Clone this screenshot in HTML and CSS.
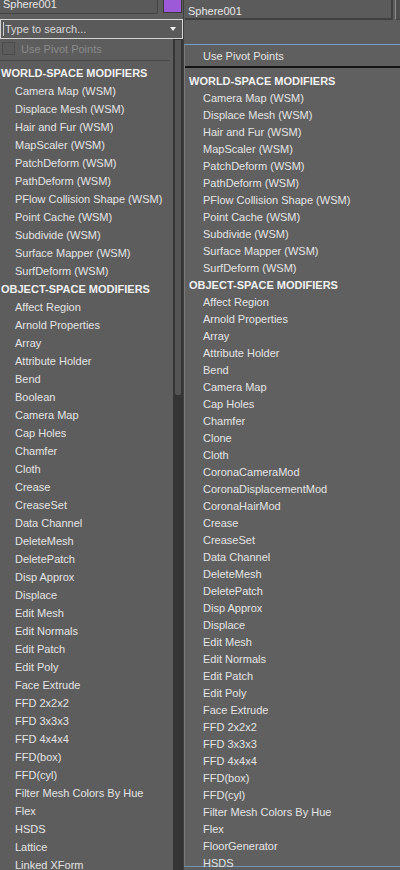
FILE: index.html
```html
<!DOCTYPE html>
<html>
<head>
<meta charset="utf-8">
<link rel="stylesheet" href="styles.css">
</head>
<body>
<div class="app">
  <div class="left">
    <div class="left-top">
      <div class="name-field">Sphere001</div>
      <div class="swatch"></div>
    </div>
    <div class="search">
      <span class="caret"></span><span class="search-text">Type to search...</span>
      <span class="arrow"></span>
    </div>
    <div class="left-body">
      <div class="left-list">
        <div class="pivot"><span class="check"></span><span>Use Pivot Points</span></div>
        <div class="sep"></div>
        <div class="hdr">WORLD-SPACE MODIFIERS</div>
        <div class="it">Camera Map (WSM)</div>
        <div class="it">Displace Mesh (WSM)</div>
        <div class="it">Hair and Fur (WSM)</div>
        <div class="it">MapScaler (WSM)</div>
        <div class="it">PatchDeform (WSM)</div>
        <div class="it">PathDeform (WSM)</div>
        <div class="it">PFlow Collision Shape (WSM)</div>
        <div class="it">Point Cache (WSM)</div>
        <div class="it">Subdivide (WSM)</div>
        <div class="it">Surface Mapper (WSM)</div>
        <div class="it">SurfDeform (WSM)</div>
        <div class="hdr">OBJECT-SPACE MODIFIERS</div>
        <div class="it">Affect Region</div>
        <div class="it">Arnold Properties</div>
        <div class="it">Array</div>
        <div class="it">Attribute Holder</div>
        <div class="it">Bend</div>
        <div class="it">Boolean</div>
        <div class="it">Camera Map</div>
        <div class="it">Cap Holes</div>
        <div class="it">Chamfer</div>
        <div class="it">Cloth</div>
        <div class="it">Crease</div>
        <div class="it">CreaseSet</div>
        <div class="it">Data Channel</div>
        <div class="it">DeleteMesh</div>
        <div class="it">DeletePatch</div>
        <div class="it">Disp Approx</div>
        <div class="it">Displace</div>
        <div class="it">Edit Mesh</div>
        <div class="it">Edit Normals</div>
        <div class="it">Edit Patch</div>
        <div class="it">Edit Poly</div>
        <div class="it">Face Extrude</div>
        <div class="it">FFD 2x2x2</div>
        <div class="it">FFD 3x3x3</div>
        <div class="it">FFD 4x4x4</div>
        <div class="it">FFD(box)</div>
        <div class="it">FFD(cyl)</div>
        <div class="it">Filter Mesh Colors By Hue</div>
        <div class="it">Flex</div>
        <div class="it">HSDS</div>
        <div class="it">Lattice</div>
        <div class="it">Linked XForm</div>
      </div>
      <div class="scroll"><div class="thumb"></div></div>
    </div>
  </div>
  <div class="right">
    <div class="right-top">
      <div class="name-field2">Sphere001</div>
      <div class="edge"></div>
    </div>
    <div class="popup">
      <div class="pivot2">Use Pivot Points</div>
      <div class="black"></div>
      <div class="list2">
        <div class="hdr2">WORLD-SPACE MODIFIERS</div>
        <div class="it2">Camera Map (WSM)</div>
        <div class="it2">Displace Mesh (WSM)</div>
        <div class="it2">Hair and Fur (WSM)</div>
        <div class="it2">MapScaler (WSM)</div>
        <div class="it2">PatchDeform (WSM)</div>
        <div class="it2">PathDeform (WSM)</div>
        <div class="it2">PFlow Collision Shape (WSM)</div>
        <div class="it2">Point Cache (WSM)</div>
        <div class="it2">Subdivide (WSM)</div>
        <div class="it2">Surface Mapper (WSM)</div>
        <div class="it2">SurfDeform (WSM)</div>
        <div class="hdr2">OBJECT-SPACE MODIFIERS</div>
        <div class="it2">Affect Region</div>
        <div class="it2">Arnold Properties</div>
        <div class="it2">Array</div>
        <div class="it2">Attribute Holder</div>
        <div class="it2">Bend</div>
        <div class="it2">Camera Map</div>
        <div class="it2">Cap Holes</div>
        <div class="it2">Chamfer</div>
        <div class="it2">Clone</div>
        <div class="it2">Cloth</div>
        <div class="it2">CoronaCameraMod</div>
        <div class="it2">CoronaDisplacementMod</div>
        <div class="it2">CoronaHairMod</div>
        <div class="it2">Crease</div>
        <div class="it2">CreaseSet</div>
        <div class="it2">Data Channel</div>
        <div class="it2">DeleteMesh</div>
        <div class="it2">DeletePatch</div>
        <div class="it2">Disp Approx</div>
        <div class="it2">Displace</div>
        <div class="it2">Edit Mesh</div>
        <div class="it2">Edit Normals</div>
        <div class="it2">Edit Patch</div>
        <div class="it2">Edit Poly</div>
        <div class="it2">Face Extrude</div>
        <div class="it2">FFD 2x2x2</div>
        <div class="it2">FFD 3x3x3</div>
        <div class="it2">FFD 4x4x4</div>
        <div class="it2">FFD(box)</div>
        <div class="it2">FFD(cyl)</div>
        <div class="it2">Filter Mesh Colors By Hue</div>
        <div class="it2">Flex</div>
        <div class="it2">FloorGenerator</div>
        <div class="it2">HSDS</div>
      </div>
    </div>
  </div>
</div>
</body>
</html>
```

FILE: styles.css
```css
html, body {
  margin: 0;
  padding: 0;
  background: #5d5d5d;
}
body {
  width: 400px;
  height: 870px;
  overflow: hidden;
  font-family: "Liberation Sans", Arial, sans-serif;
  font-size: 11px;
  color: #e4e4e4;
}
.app {
  display: flex;
  height: 870px;
  overflow: hidden;
}
.left {
  width: 183px;
  flex: 0 0 183px;
  display: flex;
  flex-direction: column;
}
.left-top {
  display: flex;
  height: 14px;
  gap: 5px;
}
.name-field {
  width: 158px;
  box-sizing: border-box;
  background: #5a5a5a;
  border-right: 1px solid #444;
  border-bottom: 1px solid #444;
  padding-left: 3px;
  line-height: 9px;
  color: #e6e6e6;
}
.swatch {
  width: 19px;
  height: 13px;
  box-sizing: border-box;
  background: #9c5ad8;
  border: 1px solid #3a3a3a;
  border-top: none;
}
.search {
  margin-top: 5px;
  height: 20px;
  box-sizing: border-box;
  border: 1px solid #d4d4d4;
  background: #5a5a5a;
  display: flex;
  align-items: center;
  padding-left: 2px;
  padding-right: 6px;
}
.caret {
  width: 1px;
  height: 14px;
  background: #cfcfcf;
  margin-right: 1px;
}
.search-text {
  flex: 1;
  color: #d8d8d8;
}
.arrow {
  width: 0;
  height: 0;
  border-left: 3px solid transparent;
  border-right: 3px solid transparent;
  border-top: 4px solid #f0f0f0;
}
.left-body {
  flex: 1;
  display: flex;
  min-height: 0;
}
.left-list {
  flex: 1;
  min-width: 0;
  overflow: hidden;
}
.pivot {
  height: 19px;
  display: flex;
  align-items: center;
  gap: 6px;
  padding-left: 2px;
  color: #8a8a8a;
}
.check {
  width: 13px;
  height: 13px;
  box-sizing: border-box;
  border: 1px solid #4c4c4c;
  background: #5b5b5b;
}
.sep {
  height: 4px;
  box-sizing: border-box;
  border-top: 1px solid #474747;
  margin-top: 2px;
  margin-right: 3px;
}
.hdr {
  height: 18px;
  line-height: 18px;
  font-weight: bold;
  padding-left: 1px;
  color: #f0f0f0;
  white-space: nowrap;
}
.it {
  height: 18px;
  line-height: 18px;
  padding-left: 15px;
  white-space: nowrap;
}
.scroll {
  width: 10px;
  flex: 0 0 10px;
  background: #353535;
  display: flex;
  justify-content: center;
  padding-top: 1px;
  box-sizing: border-box;
}
.thumb {
  width: 6px;
  height: 355px;
  background: #555;
  border-radius: 0 0 2px 2px;
}
.right {
  flex: 1;
  display: flex;
  flex-direction: column;
  border-left: 1px solid #3e3e3e;
  min-width: 0;
}
.right-top {
  height: 20px;
  display: flex;
  gap: 2px;
  padding-left: 1px;
}
.name-field2 {
  flex: 1;
  box-sizing: border-box;
  background: #5b5b5b;
  border-right: 2px solid #404040;
  border-bottom: 2px solid #404040;
  padding-left: 3px;
  padding-top: 4px;
  line-height: 14px;
  color: #e8e8e8;
}
.edge {
  width: 5px;
  box-sizing: border-box;
  border-left: 1px solid #8a8a8a;
  border-bottom: 1px solid #444;
  background: #4e4e4e;
}
.popup {
  margin-top: 24px;
  height: 823px;
  box-sizing: border-box;
  border-top: 1px solid #6f9fcc;
  border-left: 1px solid #7a7a7a;
  border-bottom: 1px solid #6f93b5;
  background: #606060;
}
.pivot2 {
  height: 21px;
  line-height: 22px;
  padding-left: 18px;
  background: #5f5f5f;
}
.black {
  height: 2px;
  background: #151515;
}
.list2 {
  padding-top: 5px;
}
.hdr2 {
  height: 17px;
  line-height: 16px;
  font-weight: bold;
  padding-left: 4px;
  color: #f0f0f0;
  white-space: nowrap;
}
.it2 {
  height: 17px;
  line-height: 17px;
  padding-left: 18px;
  white-space: nowrap;
}
```
